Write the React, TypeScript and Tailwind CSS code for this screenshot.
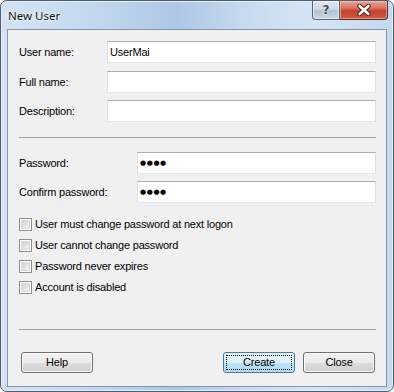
import * as React from "react";

function TextRow({
  label,
  value,
  labelW,
  masked,
  className,
}: {
  label: string;
  value?: string;
  labelW: string;
  masked?: boolean;
  className?: string;
}) {
  return (
    <div className={`flex items-center h-[22px] ${className ?? ""}`}>
      <span className={`${labelW} shrink-0`}>{label}</span>
      <div className="flex-1 h-full bg-white border border-t-[#abadb3] border-l-[#e2e3ea] border-r-[#dbdfe6] border-b-[#e3e9ef] flex items-center pl-[2px]">
        {masked ? (
          <span className="font-['DejaVu_Sans',sans-serif] text-[7px] tracking-[0.6px] leading-none">
            {value}
          </span>
        ) : (
          <span>{value}</span>
        )}
      </div>
    </div>
  );
}

function Check({ label }: { label: string }) {
  return (
    <div className="flex items-center h-[13px] gap-[3px]">
      <div className="w-[13px] h-[13px] border border-[#8e8f8f] bg-white p-[1px] shrink-0">
        <div className="w-full h-full border border-[#dcdcdc] bg-[linear-gradient(135deg,#cdd0d4,#f4f4f5)]" />
      </div>
      <span className="leading-none">{label}</span>
    </div>
  );
}

function Btn({ label, primary }: { label: string; primary?: boolean }) {
  if (primary) {
    return (
      <div className="w-[72px] h-[21px] rounded-[3px] border border-[#3c7fb1] p-[2px] bg-[linear-gradient(to_bottom,#ebf6fd_0%,#d9effb_50%,#bde4f8_51%,#a9daf4_100%)]">
        <div className="w-full h-full border border-dotted border-black flex items-center justify-center">
          {label}
        </div>
      </div>
    );
  }
  return (
    <div className="w-[72px] h-[21px] rounded-[3px] border border-[#707070] flex items-center justify-center bg-[linear-gradient(to_bottom,#f2f2f2_0%,#ebebeb_50%,#dddddd_51%,#cfcfcf_100%)] shadow-[inset_0_0_0_1px_#fbfbfb]">
      {label}
    </div>
  );
}

export default function App() {
  return (
    <div className="w-[394px] h-[392px] rounded-[7px] border border-[#4a5d75] flex flex-col px-[6px] pb-[4px] bg-[linear-gradient(to_right,#d3e3f4_0%,#c4d9ef_22%,#adc7e5_45%,#c6daef_62%,#d6e5f4_80%,#c3d8ee_100%)] shadow-[inset_0_0_0_1px_#e6eef8]">
      {/* title bar */}
      <div className="h-[28px] flex items-start shrink-0">
        <span className="mt-[6px] ml-[1px] font-['Noto_Sans',sans-serif] text-[11.5px] text-[#141414] [text-shadow:0_0_6px_#ffffff,0_0_3px_#ffffff]">
          New User
        </span>
        <div className="ml-auto flex h-[19px] mr-[-1px]">
          <div className="w-[28px] h-full rounded-bl-[4px] border border-t-0 border-[#52667f] bg-[linear-gradient(to_bottom,#e3ebf4_0%,#cdd8e5_45%,#b4c3d4_55%,#c9d5e3_100%)] flex items-center justify-center shadow-[inset_0_0_0_1px_rgba(255,255,255,0.5)]">
            <span className="font-['DejaVu_Sans',sans-serif] font-bold text-[12px] leading-none text-[#3d4957] [text-shadow:0_0_2px_#ffffff,0_0_1px_#ffffff]">
              ?
            </span>
          </div>
          <div className="w-[48px] h-full rounded-br-[4px] border border-t-0 border-l-0 border-[#5a2b26] bg-[linear-gradient(to_bottom,#e9a595_0%,#d8705c_40%,#c5412b_55%,#d25a40_100%)] flex items-center justify-center shadow-[inset_0_0_0_1px_rgba(255,210,200,0.5)]">
            <svg width="16" height="12" viewBox="0 0 16 12">
              <path
                d="M3.5 2 L12.5 10 M12.5 2 L3.5 10"
                stroke="#4a1a14"
                strokeWidth="4.4"
                strokeLinecap="round"
                fill="none"
              />
              <path
                d="M3.5 2 L12.5 10 M12.5 2 L3.5 10"
                stroke="#ffffff"
                strokeWidth="2.6"
                strokeLinecap="round"
                fill="none"
              />
            </svg>
          </div>
        </div>
      </div>

      {/* client area */}
      <div className="flex-1 border border-[#8396ad] bg-[#f0f0f0] flex flex-col pl-[11px] pr-[10px] pt-[11px] font-['Liberation_Sans',sans-serif] text-[11px] tracking-[-0.2px] text-black">
        <TextRow label="User name:" value="UserMai" labelW="w-[88px]" />
        <TextRow label="Full name:" labelW="w-[88px]" className="mt-[8px]" />
        <TextRow label="Description:" labelW="w-[88px]" className="mt-[7px]" />

        <div className="mt-[15px] h-px bg-[#a0a0a0]" />

        <TextRow label="Password:" value="●●●●" labelW="w-[118px]" masked className="mt-[14px]" />
        <TextRow label="Confirm password:" value="●●●●" labelW="w-[118px]" masked className="mt-[7px]" />

        <div className="mt-[15px] flex flex-col gap-[8px]">
          <Check label="User must change password at next logon" />
          <Check label="User cannot change password" />
          <Check label="Password never expires" />
          <Check label="Account is disabled" />
        </div>

        <div className="mt-[35px] h-px bg-[#a0a0a0]" />

        <div className="mt-[22px] flex items-center pl-[2px] pr-[1px]">
          <Btn label="Help" />
          <div className="ml-auto flex gap-[8px]">
            <Btn label="Create" primary />
            <Btn label="Close" />
          </div>
        </div>
      </div>
    </div>
  );
}
